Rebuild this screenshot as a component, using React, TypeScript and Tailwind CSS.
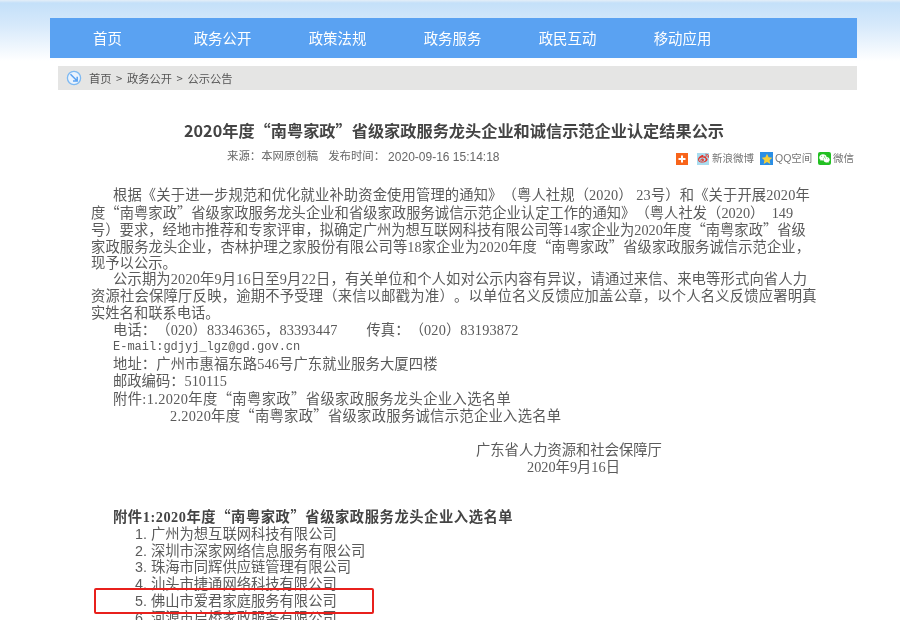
import { FaWeibo, FaWeixin } from "react-icons/fa";

const serif = "font-['Liberation_Serif','Noto_Sans_CJK_SC',serif]";

const nav = ["首页", "政务公开", "政策法规", "政务服务", "政民互动", "移动应用"];

const para: { t: string; c: string }[] = [
  { t: "根据《关于进一步规范和优化就业补助资金使用管理的通知》（粤人社规（2020） 23号）和《关于开展2020年", c: "pl-[22px] tracking-[0.13px]" },
  { t: "度“南粤家政”省级家政服务龙头企业和省级家政服务诚信示范企业认定工作的通知》（粤人社发（2020）\u00a0\u00a0149", c: "tracking-[0.03px]" },
  { t: "号）要求，经地市推荐和专家评审，拟确定广州为想互联网科技有限公司等14家企业为2020年度“南粤家政”省级", c: "" },
  { t: "家政服务龙头企业，杏林护理之家股份有限公司等18家企业为2020年度“南粤家政”省级家政服务诚信示范企业，", c: "tracking-[0.08px]" },
  { t: "现予以公示。", c: "" },
  { t: "公示期为2020年9月16日至9月22日，有关单位和个人如对公示内容有异议，请通过来信、来电等形式向省人力", c: "pl-[22px] tracking-[0.15px]" },
  { t: "资源社会保障厅反映，逾期不予受理（来信以邮戳为准）。以单位名义反馈应加盖公章，以个人名义反馈应署明真", c: "tracking-[0.22px]" },
  { t: "实姓名和联系电话。", c: "" },
  { t: "电话：（020）83346365，83393447　　传真：（020）83193872", c: "pl-[22px] tracking-[0.12px]" },
  { t: "E-mail:gdjyj_lgz@gd.gov.cn", c: "pl-[22px] text-[12px] font-['Liberation_Mono',monospace]" },
  { t: "地址：广州市惠福东路546号广东就业服务大厦四楼", c: "pl-[22px] tracking-[0.12px]" },
  { t: "邮政编码：510115", c: "pl-[22px]" },
  { t: "附件:1.2020年度“南粤家政”省级家政服务龙头企业入选名单", c: "pl-[22px] tracking-[0.38px]" },
  { t: "2.2020年度“南粤家政”省级家政服务诚信示范企业入选名单", c: "pl-[79px] tracking-[0.3px]" },
];

const list = [
  "1. 广州为想互联网科技有限公司",
  "2. 深圳市深家网络信息服务有限公司",
  "3. 珠海市同辉供应链管理有限公司",
  "4. 汕头市捷通网络科技有限公司",
  "5. 佛山市爱君家庭服务有限公司",
  "6. 河源市启桥家政服务有限公司",
];

function T({ t }: { t: string }) {
  return (
    <>
      {t.split(/([“”])/).map((s, i) =>
        s === "“" || s === "”" ? (
          <span key={i} className="font-['Noto_Sans_CJK_SC',sans-serif]">
            {s}
          </span>
        ) : (
          s
        )
      )}
    </>
  );
}

function Compass() {
  return (
    <svg viewBox="0 0 16 16" className="w-[16px] h-[16px] shrink-0">
      <circle cx="8" cy="8" r="6.6" fill="#eaf3fd" stroke="#7db9f2" strokeWidth="1.3" />
      <path d="M4.5 4.2 L11 10.8 M11.2 6.8 V11 H7" fill="none" stroke="#5aa2f2" strokeWidth="1.5" />
    </svg>
  );
}

export default function App() {
  return (
    <div className="w-[900px] h-[620px] overflow-hidden bg-white bg-[linear-gradient(to_bottom,#e4eef8_0px,#c4e0f9_3px,#d6e9fb_25px,#ffffff_61px)] pt-[18px] text-[#555] blur-[0.4px] [text-spacing-trim:space-all]">
      <nav className="ml-[50px] w-[807px] h-10 bg-[#5aa2f2] flex text-white text-[14.4px] font-['Noto_Sans_CJK_SC',sans-serif]">
        {nav.map((n) => (
          <div key={n} className="w-[115px] flex items-center justify-center">
            {n}
          </div>
        ))}
      </nav>

      <div className="ml-[58px] w-[799px] h-6 mt-2 bg-[#e5e5e4] flex items-center pl-[8px] gap-[7px] text-[11.3px] text-[#555] font-['Noto_Sans_CJK_SC',sans-serif]">
        <Compass />
        <span>
          首页<span className="mx-[4.5px]">&gt;</span>政务公开<span className="mx-[4.5px]">&gt;</span>公示公告
        </span>
      </div>

      <h1 className="mt-[28px] ml-[184px] h-6 leading-6 whitespace-nowrap text-[16.2px] font-bold text-[#444] font-['Noto_Sans_CJK_SC',sans-serif]">
        2020年度“南粤家政”省级家政服务龙头企业和诚信示范企业认定结果公示
      </h1>

      <div className="relative mt-[5px] h-[20px] flex items-center text-[11.4px] text-[#666] font-['Liberation_Sans','Noto_Sans_CJK_SC',sans-serif]">
        <span className="ml-[227px] whitespace-pre">来源：本网原创稿</span>
        <span className="ml-[10px] whitespace-pre">发布时间：</span>
        <span className="ml-[3px] text-[12px]">2020-09-16 15:14:18</span>

        <div className="absolute left-[676px] top-[4px] flex items-center text-[10.5px] text-[#777]">
          <span className="w-[12px] h-[12px] bg-[#f8641a] text-white flex items-center justify-center">
            <svg viewBox="0 0 12 12" className="w-[12px] h-[12px]">
              <path d="M6 2.5V9.5M2.5 6H9.5" stroke="#fff" strokeWidth="2" />
            </svg>
          </span>
          <span className="ml-[9px] w-[12px] h-[12px] bg-[#a9dcef] flex items-center justify-center text-[#e0352b]">
            <FaWeibo size={11} />
          </span>
          <span className="ml-[3px] w-[48px]">新浪微博</span>
          <span className="w-[13px] h-[13px] bg-[#2a8fe6] flex items-center justify-center">
            <svg viewBox="0 0 12 12" className="w-[12px] h-[12px]">
              <path d="M6 0.8 7.6 4.3 11.3 4.7 8.6 7.2 9.3 11 6 9.1 2.7 11 3.4 7.2 0.7 4.7 4.4 4.3Z" fill="#f5cf3a" />
            </svg>
          </span>
          <span className="ml-[2px] w-[43px]">QQ空间</span>
          <span className="w-[13px] h-[13px] bg-[#22c022] rounded-[2px] flex items-center justify-center text-white">
            <FaWeixin size={11} />
          </span>
          <span className="ml-[2px]">微信</span>
        </div>
      </div>

      <div className={`mt-[20px] pl-[91px] text-[14.3px] leading-[16.9px] text-[#5a5a5a] whitespace-nowrap ${serif}`}>
        {para.map((p) => (
          <div key={p.t} className={`h-[16.9px] ${p.c}`}>
            <T t={p.t} />
          </div>
        ))}

        <div className="mt-[19px] h-[16.9px] ml-[385px]">广东省人力资源和社会保障厅</div>
        <div className="h-[16.9px] ml-[436px]">2020年9月16日</div>

        <div className="mt-[31.5px] h-[16.9px] pl-[22px] font-bold text-[#444] tracking-[0.55px]">
          <T t="附件1:2020年度“南粤家政”省级家政服务龙头企业入选名单" />
        </div>

        <div className="relative mt-[1px] pl-[44px] font-['Liberation_Sans','Noto_Sans_CJK_SC',sans-serif]">
          {list.map((l) => (
            <div key={l} className="h-[16.9px]">
              {l}
            </div>
          ))}
          <div className="absolute left-[3px] top-[62.5px] w-[280px] h-[26px] border-2 border-[#e8201c] rounded-[2px]" />
        </div>
      </div>
    </div>
  );
}
